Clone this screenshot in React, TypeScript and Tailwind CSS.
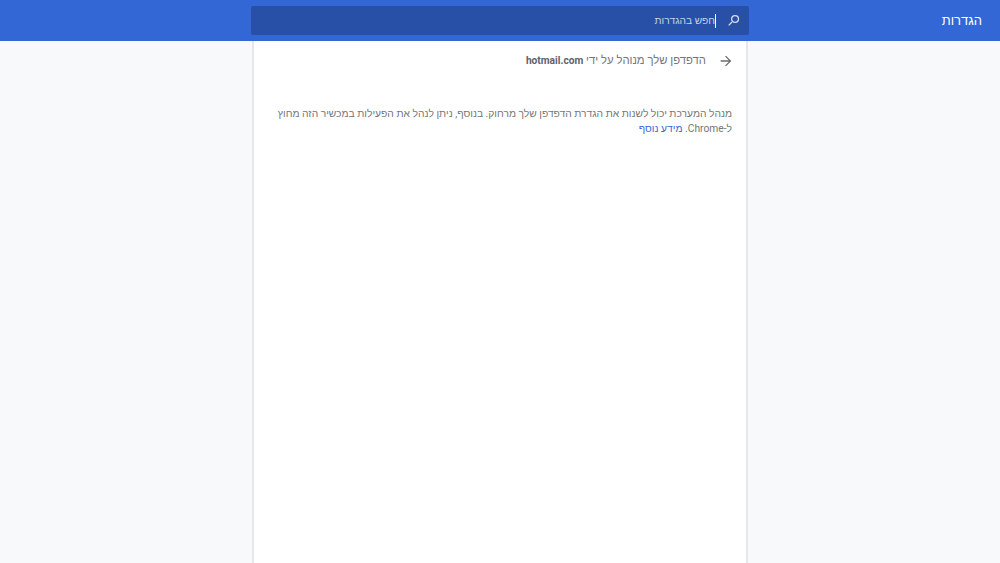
import React from 'react';

export default function App() {
  return (
    <div dir="rtl" className="h-[563px] overflow-hidden flex flex-col bg-[#f8f9fa] font-['Roboto','Liberation_Sans',sans-serif]">
      <header className="h-[41px] shrink-0 bg-[#3367d6] flex items-start">
        <h1 className="w-[251px] shrink-0 pr-[18px] pt-[10.5px] text-[13px] leading-[20px] font-normal text-white">הגדרות</h1>
        <div className="mt-[6px] w-[498px] h-[29px] rounded-[2px] bg-[#2850a7] flex items-center pr-[8px]">
          <svg width="15" height="15" viewBox="0 0 24 24" fill="currentColor" className="text-[#d5dcec] -scale-x-100 shrink-0">
            <path d="M15.5 14h-.79l-.28-.27A6.471 6.471 0 0 0 16 9.5 6.5 6.5 0 1 0 9.5 16c1.61 0 3.09-.59 4.23-1.57l.27.28v.79l5 4.99L20.49 19l-4.99-5zm-6 0C7.01 14 5 11.99 5 9.5S7.01 5 9.5 5 14 7.01 14 9.5 11.99 14 9.5 14z" />
          </svg>
          <span className="mr-[10px] border-r border-white text-[10.2px] leading-[14px] text-[#c6d2ea]">חפש בהגדרות</span>
        </div>
      </header>
      <main className="w-[496px] mx-auto flex-1 bg-white border-x-2 border-[#e6e7e9] px-[14px]">
        <div className="flex items-center h-[41px]">
          <svg width="16" height="16" viewBox="0 0 24 24" fill="currentColor" className="text-[#6a6e72] -mr-[2px] -mt-px -scale-x-100 shrink-0">
            <path d="M20 11H7.83l5.59-5.59L12 4l-8 8 8 8 1.41-1.41L7.83 13H20v-2z" />
          </svg>
          <span className="mr-[12px] text-[11.3px] text-[#73777b]">
            הדפדפן שלך מנוהל על ידי <b className="font-bold text-[10.2px] text-[#5f6368]">hotmail.com</b>
          </span>
        </div>
        <p className="mt-[24px] text-[10.28px] leading-[15px] text-[#73777b]">
          מנהל המערכת יכול לשנות את הגדרת הדפדפן שלך מרחוק. בנוסף, ניתן לנהל את הפעילות במכשיר הזה מחוץ <span className="whitespace-nowrap">ל-Chrome.</span> <a className="text-[#3367d6]">מידע נוסף</a>
        </p>
      </main>
    </div>
  );
}
